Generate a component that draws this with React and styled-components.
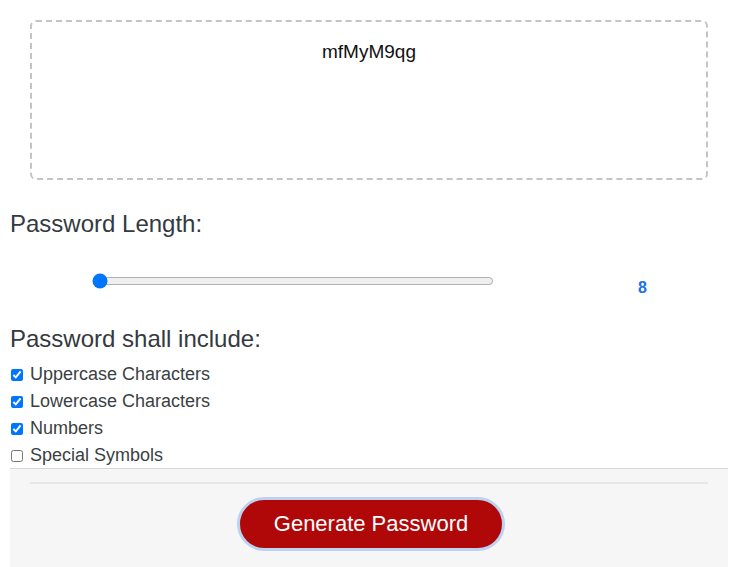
import React, { useState } from 'react';
import styled, { createGlobalStyle } from 'styled-components';

const GlobalStyle = createGlobalStyle`
  body {
    margin: 0;
    background: #ffffff;
    font-family: 'Liberation Sans', Arial, sans-serif;
  }
`;

const options = [
  { id: 'upper', label: 'Uppercase Characters', checked: true },
  { id: 'lower', label: 'Lowercase Characters', checked: true },
  { id: 'numbers', label: 'Numbers', checked: true },
  { id: 'symbols', label: 'Special Symbols', checked: false }
];

const App = () => {
  const [length, setLength] = useState(8);

  return (
    <>
      <GlobalStyle />
      <Container>
        <PasswordBox>mfMyM9qg</PasswordBox>

        <SectionTitle>Password Length:</SectionTitle>
        <SliderRow>
          <Slider
            type="range"
            min="8"
            max="32"
            value={length}
            onChange={(e) => setLength(Number(e.target.value))}
          />
          <LengthValue>{length}</LengthValue>
        </SliderRow>

        <SectionTitle $gap={29}>Password shall include:</SectionTitle>
        <OptionList>
          {options.map((option) => (
            <OptionRow key={option.id}>
              <Checkbox type="checkbox" defaultChecked={option.checked} />
              {option.label}
            </OptionRow>
          ))}
        </OptionList>

        <Footer>
          <Divider />
          <GenerateButton>Generate Password</GenerateButton>
        </Footer>
      </Container>
    </>
  );
};

const Container = styled.div`
  margin: 0 15px 0 10px;
  display: flex;
  flex-direction: column;
`;

const PasswordBox = styled.div`
  margin: 20px 20px 0;
  height: 160px;
  box-sizing: border-box;
  border: 2px dashed #c4c4c4;
  border-radius: 6px;
  padding-top: 19px;
  text-align: center;
  font-size: 19px;
  color: #111;
`;

const SectionTitle = styled.h2`
  margin: ${(p) => p.$gap || 30}px 0 0;
  font-size: 24px;
  line-height: 28px;
  font-weight: 400;
  color: #343a40;
`;

const SliderRow = styled.div`
  display: flex;
  align-items: center;
  height: 30px;
  margin-top: 28px;
`;

const Slider = styled.input`
  width: 402px;
  margin: 0 0 0 82px;
`;

const LengthValue = styled.span`
  margin-left: 144px;
  padding-top: 13px;
  font-size: 16px;
  font-weight: 700;
  color: #1a73e8;
`;

const OptionList = styled.div`
  display: flex;
  flex-direction: column;
  margin-top: 8px;
`;

const OptionRow = styled.label`
  display: flex;
  align-items: center;
  height: 27px;
  font-size: 18px;
  color: #3a3f44;
`;

const Checkbox = styled.input`
  width: 12px;
  height: 12px;
  margin: 0 7px 0 1px;
`;

const Footer = styled.div`
  margin-top: -1px;
  border-top: 1px solid #d6d6d6;
  background: #f6f6f6;
  padding: 13px 20px 20px;
  display: flex;
  flex-direction: column;
  align-items: center;
`;

const Divider = styled.div`
  align-self: stretch;
  height: 2px;
  background: #e6e6e6;
`;

const GenerateButton = styled.button`
  margin: 13px 0 0 4px;
  width: 268px;
  height: 54px;
  border: 3px solid #bcd2f2;
  border-radius: 27px;
  background: #b00808;
  color: #ffffff;
  font-family: 'Liberation Sans', Arial, sans-serif;
  font-size: 22px;
  cursor: pointer;
`;

export default App;
